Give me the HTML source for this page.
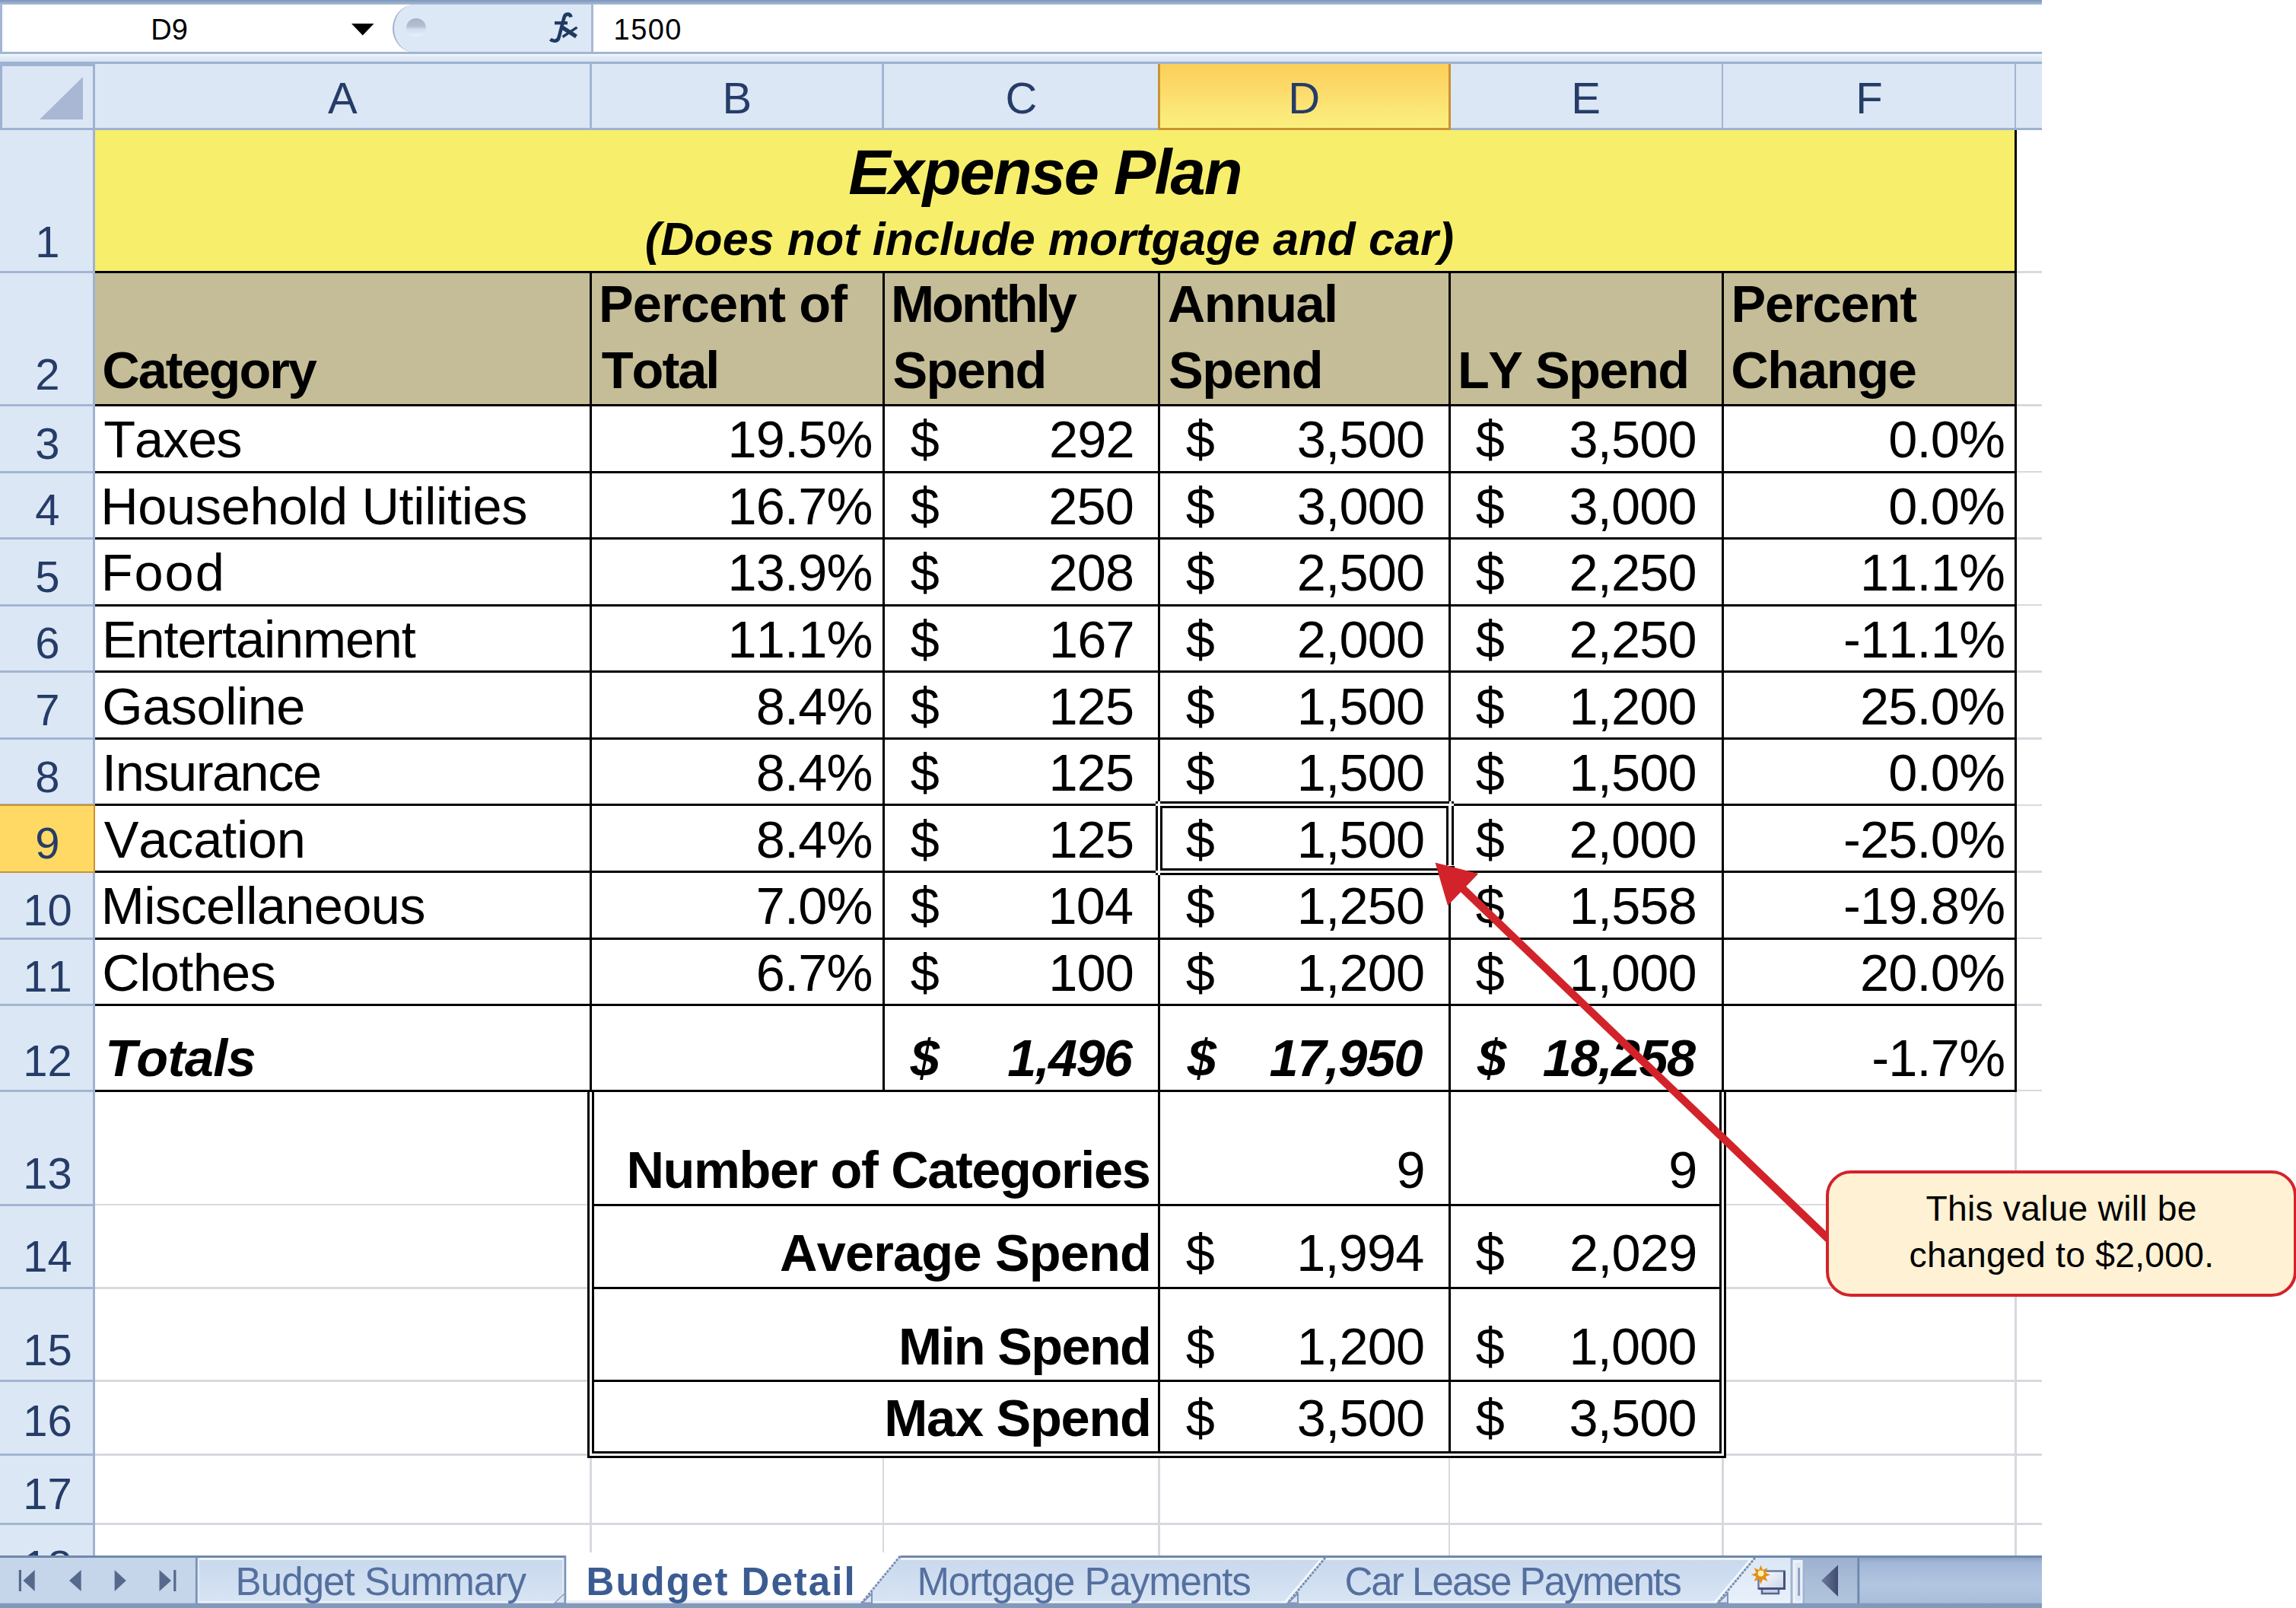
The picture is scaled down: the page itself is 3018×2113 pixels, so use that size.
<!DOCTYPE html>
<html><head><meta charset="utf-8"><title>Expense Plan</title><style>
html,body{margin:0;padding:0}
body{width:3018px;height:2113px;position:relative;overflow:hidden;background:#fff;font-family:"Liberation Sans",sans-serif;color:#000}
#p{position:absolute;left:0;top:0;width:3018px;height:2113px;overflow:hidden}
#p div,#p svg{position:absolute}
.t{line-height:1;white-space:nowrap;font-kerning:none}
.b{font-weight:bold}
.bi{font-weight:bold;font-style:italic}
.ui{color:#000}
.hd{color:#263c68}
</style></head><body><div id="p">
<div style="left:0px;top:0px;width:2684px;height:2113px;background:#fff"></div>
<div style="left:124.8px;top:356.1px;width:2559.2px;height:2.6px;background:#d8d9df"></div>
<div style="left:124.8px;top:531.1px;width:2559.2px;height:2.6px;background:#d8d9df"></div>
<div style="left:124.8px;top:618.7px;width:2559.2px;height:2.6px;background:#d8d9df"></div>
<div style="left:124.8px;top:706.2px;width:2559.2px;height:2.6px;background:#d8d9df"></div>
<div style="left:124.8px;top:793.8px;width:2559.2px;height:2.6px;background:#d8d9df"></div>
<div style="left:124.8px;top:881.4px;width:2559.2px;height:2.6px;background:#d8d9df"></div>
<div style="left:124.8px;top:969px;width:2559.2px;height:2.6px;background:#d8d9df"></div>
<div style="left:124.8px;top:1056.6px;width:2559.2px;height:2.6px;background:#d8d9df"></div>
<div style="left:124.8px;top:1144.2px;width:2559.2px;height:2.6px;background:#d8d9df"></div>
<div style="left:124.8px;top:1231.7px;width:2559.2px;height:2.6px;background:#d8d9df"></div>
<div style="left:124.8px;top:1319.4px;width:2559.2px;height:2.6px;background:#d8d9df"></div>
<div style="left:124.8px;top:1431.7px;width:2559.2px;height:2.6px;background:#d8d9df"></div>
<div style="left:124.8px;top:1581.7px;width:2559.2px;height:2.6px;background:#d8d9df"></div>
<div style="left:124.8px;top:1691.1px;width:2559.2px;height:2.6px;background:#d8d9df"></div>
<div style="left:124.8px;top:1813.2px;width:2559.2px;height:2.6px;background:#d8d9df"></div>
<div style="left:124.8px;top:1910px;width:2559.2px;height:2.6px;background:#d8d9df"></div>
<div style="left:124.8px;top:2001.2px;width:2559.2px;height:2.6px;background:#d8d9df"></div>
<div style="left:775.3px;top:171px;width:2.6px;height:1873px;background:#d8d9df"></div>
<div style="left:1159.8px;top:171px;width:2.6px;height:1873px;background:#d8d9df"></div>
<div style="left:1522.3px;top:171px;width:2.6px;height:1873px;background:#d8d9df"></div>
<div style="left:1903.7px;top:171px;width:2.6px;height:1873px;background:#d8d9df"></div>
<div style="left:2263.1px;top:171px;width:2.6px;height:1873px;background:#d8d9df"></div>
<div style="left:2648px;top:171px;width:2.6px;height:1873px;background:#d8d9df"></div>
<div style="left:124.8px;top:171px;width:2524.5px;height:186.4px;background:#f7ef6c"></div>
<div style="left:124.8px;top:357.4px;width:2524.5px;height:175px;background:#c4bd97"></div>
<div style="left:124.8px;top:532.4px;width:2524.5px;height:900.6px;background:#fff"></div>
<div style="left:776.6px;top:1433px;width:1487.8px;height:478.3px;background:#fff"></div>
<div style="left:124.8px;top:355.9px;width:2526px;height:3px;background:#000"></div>
<div style="left:124.8px;top:530.9px;width:2526px;height:3px;background:#000"></div>
<div style="left:124.8px;top:618.5px;width:2526px;height:3px;background:#000"></div>
<div style="left:124.8px;top:706px;width:2526px;height:3px;background:#000"></div>
<div style="left:124.8px;top:793.6px;width:2526px;height:3px;background:#000"></div>
<div style="left:124.8px;top:881.2px;width:2526px;height:3px;background:#000"></div>
<div style="left:124.8px;top:968.8px;width:2526px;height:3px;background:#000"></div>
<div style="left:124.8px;top:1056.4px;width:2526px;height:3px;background:#000"></div>
<div style="left:124.8px;top:1144px;width:2526px;height:3px;background:#000"></div>
<div style="left:124.8px;top:1231.5px;width:2526px;height:3px;background:#000"></div>
<div style="left:124.8px;top:1319.2px;width:2526px;height:3px;background:#000"></div>
<div style="left:124.8px;top:1431.5px;width:2526px;height:3px;background:#000"></div>
<div style="left:775.1px;top:355.9px;width:3px;height:1078.6px;background:#000"></div>
<div style="left:1159.6px;top:355.9px;width:3px;height:1078.6px;background:#000"></div>
<div style="left:1522.1px;top:355.9px;width:3px;height:1078.6px;background:#000"></div>
<div style="left:1903.5px;top:355.9px;width:3px;height:1078.6px;background:#000"></div>
<div style="left:2262.9px;top:355.9px;width:3px;height:1078.6px;background:#000"></div>
<div style="left:2647.8px;top:171px;width:3px;height:1263.5px;background:#000"></div>
<div style="left:779.6px;top:1581.5px;width:1481.8px;height:3px;background:#000"></div>
<div style="left:779.6px;top:1690.9px;width:1481.8px;height:3px;background:#000"></div>
<div style="left:779.6px;top:1813px;width:1481.8px;height:3px;background:#000"></div>
<div style="left:1522.1px;top:1433px;width:3px;height:475.3px;background:#000"></div>
<div style="left:1903.5px;top:1433px;width:3px;height:475.3px;background:#000"></div>
<div style="left:772px;top:1434.5px;width:9.2px;height:481.3px;background:#fff"></div>
<div style="left:2259.8px;top:1434.5px;width:9.2px;height:481.3px;background:#fff"></div>
<div style="left:772px;top:1906.7px;width:1497px;height:9.2px;background:#fff"></div>
<div style="left:772px;top:1431.5px;width:3px;height:484.4px;background:#000"></div>
<div style="left:778.1px;top:1431.5px;width:3px;height:478.1px;background:#000"></div>
<div style="left:2266px;top:1431.5px;width:3px;height:484.4px;background:#000"></div>
<div style="left:2259.9px;top:1431.5px;width:3px;height:478.1px;background:#000"></div>
<div style="left:778.1px;top:1906.75px;width:1484.8px;height:2.9px;background:#000"></div>
<div style="left:772px;top:1913.05px;width:1497px;height:2.9px;background:#000"></div>
<div style="left:1519px;top:1053px;width:391.5px;height:97px;box-sizing:border-box;border:3px solid #000;background:#fff"></div>
<div style="left:1522px;top:1056px;width:385.5px;height:91px;box-sizing:border-box;border:3.3px solid #fff"></div>
<div style="left:1525.3px;top:1059.4px;width:379px;height:84.4px;box-sizing:border-box;border:3px solid #000"></div>
<div style="left:1519px;top:1056px;width:3px;height:3px;background:#fff"></div>
<div style="left:1522px;top:1053px;width:3px;height:3px;background:#fff"></div>
<div style="left:1519px;top:1144px;width:3px;height:3px;background:#fff"></div>
<div style="left:1522px;top:1147px;width:3px;height:3px;background:#fff"></div>
<div style="left:1907.5px;top:1056px;width:3px;height:3px;background:#fff"></div>
<div style="left:1904.5px;top:1053px;width:3px;height:3px;background:#fff"></div>
<div style="left:1903px;top:1138px;width:9px;height:9px;background:#000;border:1.5px solid #fff;box-sizing:content-box;margin:-1.5px"></div>
<div style="left:0px;top:0px;width:2684px;height:6px;background:linear-gradient(#7c95ba,#a9bcd8)"></div>
<div style="left:0px;top:5.5px;width:2684px;height:63px;background:#fff"></div>
<div style="left:0px;top:5.5px;width:3px;height:63px;background:#a3b6d3"></div>
<div style="left:516px;top:6px;width:264px;height:62.5px;background:#dce8f6;border-left:2.5px solid #a3b2cc;border-radius:30px 0 0 30px/31px 0 0 31px;box-sizing:border-box"></div>
<div style="left:777px;top:6px;width:3px;height:62.5px;background:#a8b9d5"></div>
<div style="left:0px;top:68px;width:2684px;height:3px;background:#a3b6d3"></div>
<div style="left:0px;top:71px;width:2684px;height:10.5px;background:linear-gradient(#f4f8fd 0,#e2ebf7 35%,#d6e3f3 100%)"></div>
<div style="left:0px;top:81px;width:2684px;height:2.8px;background:#9eb2d1"></div>
<div style="left:0px;top:83.8px;width:2684px;height:84.2px;background:#dbe7f5"></div>
<div style="left:0px;top:168px;width:2684px;height:3px;background:#9eb2d1"></div>
<div style="left:0px;top:171px;width:122.5px;height:1873px;background:#dbe7f5"></div>
<div style="left:122.2px;top:84px;width:2.6px;height:1960px;background:#a0b1d0"></div>
<div style="left:0px;top:85px;width:3px;height:85px;background:#9eb2d1"></div>
<div style="left:774.9px;top:84px;width:2.8px;height:84px;background:#a3b5d2"></div>
<div style="left:1159.4px;top:84px;width:2.8px;height:84px;background:#a3b5d2"></div>
<div style="left:1521.9px;top:84px;width:2.8px;height:84px;background:#a3b5d2"></div>
<div style="left:1903.3px;top:84px;width:2.8px;height:84px;background:#a3b5d2"></div>
<div style="left:2262.7px;top:84px;width:2.8px;height:84px;background:#a3b5d2"></div>
<div style="left:2647.6px;top:84px;width:2.8px;height:84px;background:#a3b5d2"></div>
<div style="left:0px;top:355.9px;width:122.5px;height:3px;background:#a3b5d2"></div>
<div style="left:0px;top:530.9px;width:122.5px;height:3px;background:#a3b5d2"></div>
<div style="left:0px;top:618.5px;width:122.5px;height:3px;background:#a3b5d2"></div>
<div style="left:0px;top:706px;width:122.5px;height:3px;background:#a3b5d2"></div>
<div style="left:0px;top:793.6px;width:122.5px;height:3px;background:#a3b5d2"></div>
<div style="left:0px;top:881.2px;width:122.5px;height:3px;background:#a3b5d2"></div>
<div style="left:0px;top:968.8px;width:122.5px;height:3px;background:#a3b5d2"></div>
<div style="left:0px;top:1056.4px;width:122.5px;height:3px;background:#a3b5d2"></div>
<div style="left:0px;top:1144px;width:122.5px;height:3px;background:#a3b5d2"></div>
<div style="left:0px;top:1231.5px;width:122.5px;height:3px;background:#a3b5d2"></div>
<div style="left:0px;top:1319.2px;width:122.5px;height:3px;background:#a3b5d2"></div>
<div style="left:0px;top:1431.5px;width:122.5px;height:3px;background:#a3b5d2"></div>
<div style="left:0px;top:1581.5px;width:122.5px;height:3px;background:#a3b5d2"></div>
<div style="left:0px;top:1690.9px;width:122.5px;height:3px;background:#a3b5d2"></div>
<div style="left:0px;top:1813px;width:122.5px;height:3px;background:#a3b5d2"></div>
<div style="left:0px;top:1909.8px;width:122.5px;height:3px;background:#a3b5d2"></div>
<div style="left:0px;top:2001px;width:122.5px;height:3px;background:#a3b5d2"></div>
<div style="left:0px;top:83.8px;width:122.2px;height:2.8px;background:#9eb2d1"></div>
<svg style="left:50px;top:98px" width="62" height="62" viewBox="0 0 62 62"><path d="M59 3V59H2Z" fill="#a9b7d4"/></svg>
<div style="left:1521.8px;top:83.6px;width:385.2px;height:87.2px;box-sizing:border-box;background:linear-gradient(#fdcf5a 0,#fcdc6c 45%,#fbe878 75%,#fbef7d 100%);border:3px solid #cb9232;border-top:0"></div>
<div style="left:0px;top:1056.5px;width:124.7px;height:90.2px;box-sizing:border-box;background:#ffd963;border:2.9px solid #cb9232;border-left:0"></div>
<svg style="left:462px;top:31px" width="30" height="16" viewBox="0 0 30 16"><path d="M0 0H29.500L14.750 15.500Z" fill="#000"/></svg>
<div style="left:534px;top:24px;width:25.5px;height:26px;border-radius:50%;background:linear-gradient(#a7b3c8 0,#b4bfd1 40%,#d3deec 55%,#e4edf8 85%,#dce8f6 100%)"></div>
<div class="t ui" style="left:198.21px;top:20.33px;font-size:38px;">D9</div>
<div class="t ui" style="left:806.61px;top:20.33px;font-size:38px;letter-spacing:1.45px;">1500</div>
<svg style="left:715px;top:10px" width="50" height="50" viewBox="715 10 50 50"><g fill="none" stroke="#203a62"><path d="M750.5 22.500C749.500 17.500 743 17 741.500 23L734.500 49.500C733 54.500 727 55 723.500 51.500" stroke-width="4.600"/><path d="M729 30.200H746" stroke-width="4.200"/><path d="M739.500 36.300L757.500 48" stroke-width="5.400"/><path d="M758.500 35.800L739.500 48.500" stroke-width="3.400"/></g></svg>
<div class="t hd" style="left:430.96px;top:99.90px;font-size:58px;">A</div>
<div class="t hd" style="left:949.51px;top:99.90px;font-size:58px;">B</div>
<div class="t hd" style="left:1321.41px;top:99.90px;font-size:58px;">C</div>
<div class="t hd" style="left:1693.36px;top:99.90px;font-size:58px;">D</div>
<div class="t hd" style="left:2065.36px;top:99.90px;font-size:58px;">E</div>
<div class="t hd" style="left:2439.14px;top:99.90px;font-size:58px;">F</div>
<div class="t hd" style="left:46.37px;top:288.80px;font-size:58px;">1</div>
<div class="t hd" style="left:46.37px;top:463.30px;font-size:58px;">2</div>
<div class="t hd" style="left:46.37px;top:553.70px;font-size:58px;">3</div>
<div class="t hd" style="left:46.37px;top:641.20px;font-size:58px;">4</div>
<div class="t hd" style="left:46.37px;top:728.80px;font-size:58px;">5</div>
<div class="t hd" style="left:46.37px;top:816.40px;font-size:58px;">6</div>
<div class="t hd" style="left:46.37px;top:904.00px;font-size:58px;">7</div>
<div class="t hd" style="left:46.37px;top:991.60px;font-size:58px;">8</div>
<div class="t hd" style="left:46.37px;top:1079.20px;font-size:58px;">9</div>
<div class="t hd" style="left:30.24px;top:1166.70px;font-size:58px;">10</div>
<div class="t hd" style="left:30.24px;top:1254.40px;font-size:58px;">11</div>
<div class="t hd" style="left:30.24px;top:1364.90px;font-size:58px;">12</div>
<div class="t hd" style="left:30.24px;top:1512.60px;font-size:58px;">13</div>
<div class="t hd" style="left:30.24px;top:1621.80px;font-size:58px;">14</div>
<div class="t hd" style="left:30.24px;top:1744.70px;font-size:58px;">15</div>
<div class="t hd" style="left:30.24px;top:1837.70px;font-size:58px;">16</div>
<div class="t hd" style="left:30.24px;top:1933.90px;font-size:58px;">17</div>
<div class="t hd" style="left:30.24px;top:2028.90px;font-size:58px;">18</div>
<div class="t bi" style="left:1115.14px;top:185.24px;font-size:83px;letter-spacing:-1.95px;">Expense Plan</div>
<div class="t bi" style="left:847.80px;top:284.36px;font-size:61px;letter-spacing:0.07px;">(Does not include mortgage and car)</div>
<div class="t b" style="left:134.19px;top:453.41px;font-size:68.5px;letter-spacing:-2.02px;">Category</div>
<div class="t b" style="left:786.92px;top:365.91px;font-size:68.5px;letter-spacing:-0.86px;">Percent of</div>
<div class="t b" style="left:790.73px;top:453.41px;font-size:68.5px;letter-spacing:-2.00px;">Total</div>
<div class="t b" style="left:1170.92px;top:365.91px;font-size:68.5px;letter-spacing:-2.93px;">Monthly</div>
<div class="t b" style="left:1173.53px;top:453.41px;font-size:68.5px;letter-spacing:-1.63px;">Spend</div>
<div class="t b" style="left:1534.79px;top:365.91px;font-size:68.5px;letter-spacing:-1.55px;">Annual</div>
<div class="t b" style="left:1536.03px;top:453.41px;font-size:68.5px;letter-spacing:-1.46px;">Spend</div>
<div class="t b" style="left:1915.92px;top:453.41px;font-size:68.5px;letter-spacing:-1.51px;">LY Spend</div>
<div class="t b" style="left:2275.42px;top:365.91px;font-size:68.5px;letter-spacing:-1.10px;">Percent</div>
<div class="t b" style="left:2275.19px;top:453.41px;font-size:68.5px;letter-spacing:-1.31px;">Change</div>
<div class="t " style="left:136.26px;top:544.21px;font-size:68.5px;letter-spacing:-1.08px;">Taxes</div>
<div class="t " style="left:956.51px;top:544.21px;font-size:68.5px;letter-spacing:-0.80px;">19.5%</div>
<div class="t " style="left:1196.66px;top:544.21px;font-size:68.5px;">$</div>
<div class="t " style="left:1378.96px;top:544.21px;font-size:68.5px;letter-spacing:-0.80px;">292</div>
<div class="t " style="left:1558.86px;top:544.21px;font-size:68.5px;">$</div>
<div class="t " style="left:1704.86px;top:544.21px;font-size:68.5px;letter-spacing:-0.80px;">3,500</div>
<div class="t " style="left:1939.86px;top:544.21px;font-size:68.5px;">$</div>
<div class="t " style="left:2062.46px;top:544.21px;font-size:68.5px;letter-spacing:-0.80px;">3,500</div>
<div class="t " style="left:2482.31px;top:544.21px;font-size:68.5px;letter-spacing:-0.80px;">0.0%</div>
<div class="t " style="left:132.18px;top:631.71px;font-size:68.5px;letter-spacing:-0.33px;">Household Utilities</div>
<div class="t " style="left:956.51px;top:631.71px;font-size:68.5px;letter-spacing:-0.80px;">16.7%</div>
<div class="t " style="left:1196.66px;top:631.71px;font-size:68.5px;">$</div>
<div class="t " style="left:1378.19px;top:631.71px;font-size:68.5px;letter-spacing:-0.80px;">250</div>
<div class="t " style="left:1558.86px;top:631.71px;font-size:68.5px;">$</div>
<div class="t " style="left:1704.86px;top:631.71px;font-size:68.5px;letter-spacing:-0.80px;">3,000</div>
<div class="t " style="left:1939.86px;top:631.71px;font-size:68.5px;">$</div>
<div class="t " style="left:2062.46px;top:631.71px;font-size:68.5px;letter-spacing:-0.80px;">3,000</div>
<div class="t " style="left:2482.31px;top:631.71px;font-size:68.5px;letter-spacing:-0.80px;">0.0%</div>
<div class="t " style="left:132.68px;top:719.31px;font-size:68.5px;letter-spacing:2.00px;">Food</div>
<div class="t " style="left:956.51px;top:719.31px;font-size:68.5px;letter-spacing:-0.80px;">13.9%</div>
<div class="t " style="left:1196.66px;top:719.31px;font-size:68.5px;">$</div>
<div class="t " style="left:1378.49px;top:719.31px;font-size:68.5px;letter-spacing:-0.80px;">208</div>
<div class="t " style="left:1558.86px;top:719.31px;font-size:68.5px;">$</div>
<div class="t " style="left:1704.86px;top:719.31px;font-size:68.5px;letter-spacing:-0.80px;">2,500</div>
<div class="t " style="left:1939.86px;top:719.31px;font-size:68.5px;">$</div>
<div class="t " style="left:2062.46px;top:719.31px;font-size:68.5px;letter-spacing:-0.80px;">2,250</div>
<div class="t " style="left:2445.01px;top:719.31px;font-size:68.5px;letter-spacing:-0.80px;">11.1%</div>
<div class="t " style="left:133.98px;top:806.91px;font-size:68.5px;letter-spacing:-1.13px;">Entertainment</div>
<div class="t " style="left:956.51px;top:806.91px;font-size:68.5px;letter-spacing:-0.80px;">11.1%</div>
<div class="t " style="left:1196.66px;top:806.91px;font-size:68.5px;">$</div>
<div class="t " style="left:1378.96px;top:806.91px;font-size:68.5px;letter-spacing:-0.80px;">167</div>
<div class="t " style="left:1558.86px;top:806.91px;font-size:68.5px;">$</div>
<div class="t " style="left:1704.86px;top:806.91px;font-size:68.5px;letter-spacing:-0.80px;">2,000</div>
<div class="t " style="left:1939.86px;top:806.91px;font-size:68.5px;">$</div>
<div class="t " style="left:2062.46px;top:806.91px;font-size:68.5px;letter-spacing:-0.80px;">2,250</div>
<div class="t " style="left:2423.00px;top:806.91px;font-size:68.5px;letter-spacing:-0.80px;">-11.1%</div>
<div class="t " style="left:134.35px;top:894.51px;font-size:68.5px;letter-spacing:-0.48px;">Gasoline</div>
<div class="t " style="left:993.81px;top:894.51px;font-size:68.5px;letter-spacing:-0.80px;">8.4%</div>
<div class="t " style="left:1196.66px;top:894.51px;font-size:68.5px;">$</div>
<div class="t " style="left:1378.39px;top:894.51px;font-size:68.5px;letter-spacing:-0.80px;">125</div>
<div class="t " style="left:1558.86px;top:894.51px;font-size:68.5px;">$</div>
<div class="t " style="left:1704.86px;top:894.51px;font-size:68.5px;letter-spacing:-0.80px;">1,500</div>
<div class="t " style="left:1939.86px;top:894.51px;font-size:68.5px;">$</div>
<div class="t " style="left:2062.46px;top:894.51px;font-size:68.5px;letter-spacing:-0.80px;">1,200</div>
<div class="t " style="left:2445.01px;top:894.51px;font-size:68.5px;letter-spacing:-0.80px;">25.0%</div>
<div class="t " style="left:134.08px;top:982.11px;font-size:68.5px;letter-spacing:-1.48px;">Insurance</div>
<div class="t " style="left:993.81px;top:982.11px;font-size:68.5px;letter-spacing:-0.80px;">8.4%</div>
<div class="t " style="left:1196.66px;top:982.11px;font-size:68.5px;">$</div>
<div class="t " style="left:1378.39px;top:982.11px;font-size:68.5px;letter-spacing:-0.80px;">125</div>
<div class="t " style="left:1558.86px;top:982.11px;font-size:68.5px;">$</div>
<div class="t " style="left:1704.86px;top:982.11px;font-size:68.5px;letter-spacing:-0.80px;">1,500</div>
<div class="t " style="left:1939.86px;top:982.11px;font-size:68.5px;">$</div>
<div class="t " style="left:2062.46px;top:982.11px;font-size:68.5px;letter-spacing:-0.80px;">1,500</div>
<div class="t " style="left:2482.31px;top:982.11px;font-size:68.5px;letter-spacing:-0.80px;">0.0%</div>
<div class="t " style="left:136.70px;top:1069.71px;font-size:68.5px;letter-spacing:-0.19px;">Vacation</div>
<div class="t " style="left:993.81px;top:1069.71px;font-size:68.5px;letter-spacing:-0.80px;">8.4%</div>
<div class="t " style="left:1196.66px;top:1069.71px;font-size:68.5px;">$</div>
<div class="t " style="left:1378.39px;top:1069.71px;font-size:68.5px;letter-spacing:-0.80px;">125</div>
<div class="t " style="left:1558.86px;top:1069.71px;font-size:68.5px;">$</div>
<div class="t " style="left:1704.86px;top:1069.71px;font-size:68.5px;letter-spacing:-0.80px;">1,500</div>
<div class="t " style="left:1939.86px;top:1069.71px;font-size:68.5px;">$</div>
<div class="t " style="left:2062.46px;top:1069.71px;font-size:68.5px;letter-spacing:-0.80px;">2,000</div>
<div class="t " style="left:2423.00px;top:1069.71px;font-size:68.5px;letter-spacing:-0.80px;">-25.0%</div>
<div class="t " style="left:132.68px;top:1157.21px;font-size:68.5px;letter-spacing:-0.60px;">Miscellaneous</div>
<div class="t " style="left:993.81px;top:1157.21px;font-size:68.5px;letter-spacing:-0.80px;">7.0%</div>
<div class="t " style="left:1196.66px;top:1157.21px;font-size:68.5px;">$</div>
<div class="t " style="left:1377.52px;top:1157.21px;font-size:68.5px;letter-spacing:-0.80px;">104</div>
<div class="t " style="left:1558.86px;top:1157.21px;font-size:68.5px;">$</div>
<div class="t " style="left:1704.86px;top:1157.21px;font-size:68.5px;letter-spacing:-0.80px;">1,250</div>
<div class="t " style="left:1939.86px;top:1157.21px;font-size:68.5px;">$</div>
<div class="t " style="left:2062.76px;top:1157.21px;font-size:68.5px;letter-spacing:-0.80px;">1,558</div>
<div class="t " style="left:2423.00px;top:1157.21px;font-size:68.5px;letter-spacing:-0.80px;">-19.8%</div>
<div class="t " style="left:134.32px;top:1244.91px;font-size:68.5px;letter-spacing:-0.62px;">Clothes</div>
<div class="t " style="left:993.81px;top:1244.91px;font-size:68.5px;letter-spacing:-0.80px;">6.7%</div>
<div class="t " style="left:1196.66px;top:1244.91px;font-size:68.5px;">$</div>
<div class="t " style="left:1378.19px;top:1244.91px;font-size:68.5px;letter-spacing:-0.80px;">100</div>
<div class="t " style="left:1558.86px;top:1244.91px;font-size:68.5px;">$</div>
<div class="t " style="left:1704.86px;top:1244.91px;font-size:68.5px;letter-spacing:-0.80px;">1,200</div>
<div class="t " style="left:1939.86px;top:1244.91px;font-size:68.5px;">$</div>
<div class="t " style="left:2062.46px;top:1244.91px;font-size:68.5px;letter-spacing:-0.80px;">1,000</div>
<div class="t " style="left:2445.01px;top:1244.91px;font-size:68.5px;letter-spacing:-0.80px;">20.0%</div>
<div class="t bi" style="left:138.15px;top:1357.11px;font-size:68.5px;letter-spacing:-0.65px;">Totals</div>
<div class="t bi" style="left:1196.67px;top:1357.11px;font-size:68.5px;">$</div>
<div class="t bi" style="left:1324.30px;top:1357.11px;font-size:68.5px;letter-spacing:-1.70px;">1,496</div>
<div class="t bi" style="left:1560.87px;top:1357.11px;font-size:68.5px;">$</div>
<div class="t bi" style="left:1668.60px;top:1357.11px;font-size:68.5px;letter-spacing:-1.49px;">17,950</div>
<div class="t bi" style="left:1942.07px;top:1357.11px;font-size:68.5px;">$</div>
<div class="t bi" style="left:2027.70px;top:1357.11px;font-size:68.5px;letter-spacing:-1.62px;">18,258</div>
<div class="t " style="left:2460.30px;top:1357.11px;font-size:68.5px;letter-spacing:-0.80px;">-1.7%</div>
<div class="t b" style="left:823.42px;top:1503.71px;font-size:68.5px;letter-spacing:-1.38px;">Number of Categories</div>
<div class="t " style="left:1835.55px;top:1503.71px;font-size:68.5px;letter-spacing:-0.80px;">9</div>
<div class="t " style="left:2193.15px;top:1503.71px;font-size:68.5px;letter-spacing:-0.80px;">9</div>
<div class="t b" style="left:1024.99px;top:1613.01px;font-size:68.5px;letter-spacing:-0.81px;">Average Spend</div>
<div class="t " style="left:1558.86px;top:1613.01px;font-size:68.5px;">$</div>
<div class="t " style="left:1704.19px;top:1613.01px;font-size:68.5px;letter-spacing:-0.80px;">1,994</div>
<div class="t " style="left:1939.86px;top:1613.01px;font-size:68.5px;">$</div>
<div class="t " style="left:2063.03px;top:1613.01px;font-size:68.5px;letter-spacing:-0.80px;">2,029</div>
<div class="t b" style="left:1181.02px;top:1735.51px;font-size:68.5px;letter-spacing:-1.67px;">Min Spend</div>
<div class="t " style="left:1558.86px;top:1735.51px;font-size:68.5px;">$</div>
<div class="t " style="left:1704.86px;top:1735.51px;font-size:68.5px;letter-spacing:-0.80px;">1,200</div>
<div class="t " style="left:1939.86px;top:1735.51px;font-size:68.5px;">$</div>
<div class="t " style="left:2062.46px;top:1735.51px;font-size:68.5px;letter-spacing:-0.80px;">1,000</div>
<div class="t b" style="left:1162.22px;top:1829.51px;font-size:68.5px;letter-spacing:-1.24px;">Max Spend</div>
<div class="t " style="left:1558.86px;top:1829.51px;font-size:68.5px;">$</div>
<div class="t " style="left:1704.86px;top:1829.51px;font-size:68.5px;letter-spacing:-0.80px;">3,500</div>
<div class="t " style="left:1939.86px;top:1829.51px;font-size:68.5px;">$</div>
<div class="t " style="left:2062.46px;top:1829.51px;font-size:68.5px;letter-spacing:-0.80px;">3,500</div>
<div style="left:0px;top:2044px;width:2684px;height:69px;background:#c5d6eb"></div>
<svg style="left:0;top:2040px" width="2684" height="73" viewBox="0 2040 2684 73"><defs><linearGradient id="tg" x1="0" y1="0" x2="0" y2="1"><stop offset="0" stop-color="#c8d8ed"/><stop offset="0.5" stop-color="#cfdef0"/><stop offset="1" stop-color="#d8e5f4"/></linearGradient><linearGradient id="ng" x1="0" y1="0" x2="0" y2="1"><stop offset="0" stop-color="#dbe7f5"/><stop offset="1" stop-color="#e9f1fa"/></linearGradient><linearGradient id="sg" x1="0" y1="0" x2="0" y2="1"><stop offset="0" stop-color="#8fa6c8"/><stop offset="0.12" stop-color="#a3b8d8"/><stop offset="0.6" stop-color="#b3c6e1"/><stop offset="1" stop-color="#a9bedb"/></linearGradient><linearGradient id="ag" x1="0" y1="0" x2="0" y2="1"><stop offset="0" stop-color="#9cb1d0"/><stop offset="0.5" stop-color="#a9bdd8"/><stop offset="1" stop-color="#b0c4de"/></linearGradient><linearGradient id="ar" x1="0" y1="0" x2="1" y2="0"><stop offset="0" stop-color="#6b7a9c"/><stop offset="1" stop-color="#3f4b6e"/></linearGradient><linearGradient id="ic" x1="0" y1="0" x2="1" y2="1"><stop offset="0" stop-color="#ffffff"/><stop offset="1" stop-color="#c9d2e6"/></linearGradient></defs><path d="M259 2107V2047H742V2107Z" fill="url(#tg)"/><path d="M1132 2107L1183 2045H2307L2257 2107Z" fill="url(#tg)"/><path d="M2257 2107L2307 2047H2354V2107Z" fill="url(#ng)"/><path d="M262 2048.500H740M1184 2048.500H2304" stroke="#eef4fb" stroke-width="3" fill="none"/><path d="M262 2105.300H740M1136 2105.300H2352" stroke="#eef3fa" stroke-width="2.800" fill="none"/><path d="M260.800 2048V2106M740.300 2048V2106" stroke="#e6eef8" stroke-width="2" fill="none"/><path d="M0 2045.600H743M1181 2045.600H2684" stroke="#7189ab" stroke-width="3" fill="none"/><path d="M258.300 2046V2107M743 2044V2107" stroke="#7c93b6" stroke-width="2.800" fill="none"/><path d="M744.400 2106.700V2040H1187L1132.500 2106.700Z" fill="#fff"/><path d="M744 2104.500H1134" stroke="#e9eef7" stroke-width="3" fill="none"/><path d="M1737.500 2048L1688.500 2106M2302.500 2048L2253.500 2106" stroke="#f2f6fc" stroke-width="3" fill="none"/><path d="M1183 2045L1132.500 2106.500M1742 2047L1692.500 2106.500M2307 2047L2257.500 2106.500" stroke="#758db1" stroke-width="2.800" stroke-dasharray="3.200 1.600" fill="none"/><path d="M1133 2106.500L1146 2094V2106.500ZM1693 2106.500L1706 2094V2106.500ZM2258 2106.500L2271 2094V2106.500Z" fill="#dbe6f4" stroke="#7f96b8" stroke-width="2"/><path d="M729 2106.500L742 2094V2106.500Z" fill="#dbe6f4" stroke="#8fa4c3" stroke-width="1.500"/><rect x="2353.500" y="2047" width="18.500" height="60" fill="#9fb3d1"/><rect x="2356.500" y="2050" width="13" height="57" fill="#eef3fb"/><rect x="2359.500" y="2053" width="8" height="51" fill="#dfe8f5"/><rect x="2363.200" y="2060" width="2.800" height="37" fill="#8ba0c2"/><rect x="2372" y="2047" width="70" height="60" fill="url(#ag)"/><path d="M2416 2056.500V2098L2394 2077Z" fill="url(#ar)"/><rect x="2441.400" y="2047" width="3.200" height="60" fill="#6f88ad"/><rect x="2444.600" y="2047" width="239.400" height="60" fill="url(#sg)"/><rect x="0" y="2106.700" width="2684" height="6.300" fill="#8299ba"/><g fill="#55698c"><rect x="24.800" y="2063" width="3.200" height="28"/><path d="M45.700 2063V2091L30.500 2077Z"/><path d="M106.600 2063V2091L91 2077Z"/><path d="M150.600 2063V2091L165.800 2077Z"/><path d="M209.500 2063V2091L225 2077Z"/><rect x="228.200" y="2063" width="3.200" height="28"/></g><path d="M2316 2088V2094H2338V2088" fill="#c7d0e4" stroke="#56668f" stroke-width="2.500"/><rect x="2311.500" y="2064.500" width="34" height="23" fill="url(#ic)" stroke="#6c7ba3" stroke-width="2.500"/><path d="M2311.500 2087.500H2345.500V2064.500" fill="none" stroke="#44527b" stroke-width="3"/><path d="M2314.600 2056.600l2.500 6.500 6.400-2.800-2.800 6.400 6.500 2.500-6.500 2.500 2.800 6.400-6.400-2.800-2.500 6.500-2.500-6.500-6.400 2.800 2.800-6.400-6.500-2.500 6.500-2.500-2.800-6.400 6.400 2.800z" fill="#e48f1c"/><circle cx="2314.600" cy="2067.600" r="4" fill="#fff3a8"/></svg>
<div class="t " style="left:309.62px;top:2053.03px;font-size:51px;letter-spacing:-0.90px;color:#55709f">Budget Summary</div>
<div class="t b" style="left:770.59px;top:2053.03px;font-size:51px;letter-spacing:2.03px;color:#3b5c93">Budget Detail</div>
<div class="t " style="left:1205.42px;top:2053.03px;font-size:51px;letter-spacing:-1.06px;color:#55709f">Mortgage Payments</div>
<div class="t " style="left:1767.41px;top:2053.03px;font-size:51px;letter-spacing:-1.93px;color:#55709f">Car Lease Payments</div>
<svg style="left:0;top:0" width="3018" height="2113" viewBox="0 0 3018 2113"><path d="M2404 1628.800L1915 1160.300" stroke="#d2232a" stroke-width="10.200" fill="none"/><path d="M1886.500 1133.500L1943.300 1148L1903 1190Z" fill="#d2232a"/></svg>
<div style="left:2400px;top:1538px;width:618.5px;height:165.5px;box-sizing:border-box;border:4.5px solid #d2232a;border-radius:33px;background:#fff1d4"></div>
<div class="t " style="left:2531.56px;top:1564.81px;font-size:46.3px;letter-spacing:0.20px;">This value will be</div>
<div class="t " style="left:2509.53px;top:1625.81px;font-size:46.3px;letter-spacing:0.25px;">changed to $2,000.</div>
</div></body></html>
